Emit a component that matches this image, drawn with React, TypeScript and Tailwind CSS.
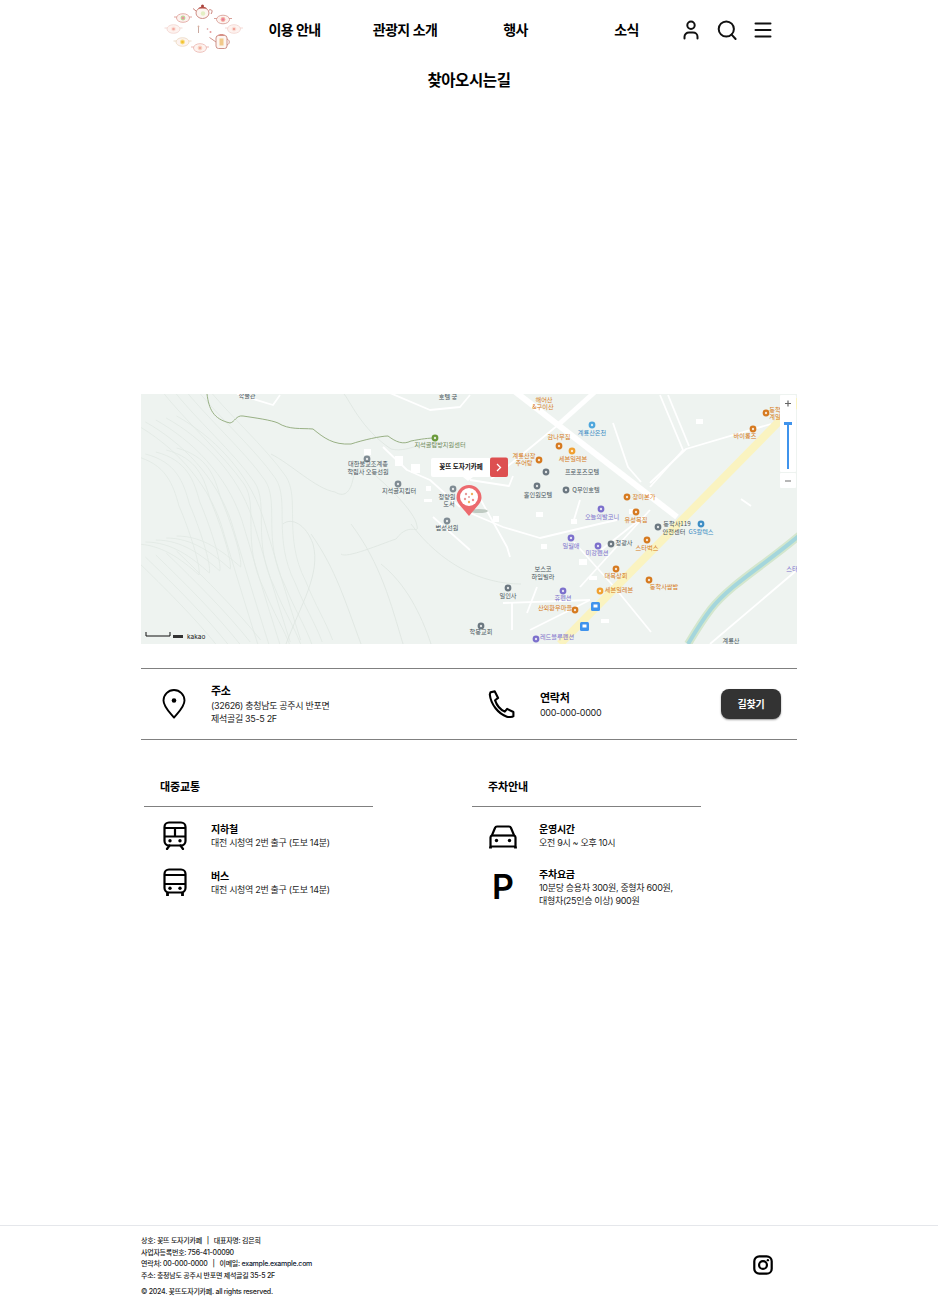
import React from "react";

const font = { fontFamily: "Inter, 'Noto Sans CJK KR', sans-serif" };

const cups = [
  { x: 22, y: 18, c: "#d98f86", f: "#ee8fa0", g: "#bcd79a" },
  { x: 62, y: 19.5, c: "#cf8a80", f: "#e9769a", g: "#f3b1a0" },
  { x: 12.5, y: 29, c: "#f1cfc9", f: "#f4a9a0", g: "#fbe3dc" },
  { x: 73, y: 29, c: "#f1cfc9", f: "#f2a196", g: "#fbe3dc" },
  { x: 21.5, y: 42, c: "#e8d2b8", f: "#f3bf2e", g: "#f7dd7a" },
  { x: 39, y: 48, c: "#e6a9a2", f: "#f3aaa0", g: "#f9d9c5" },
];

const Logo = () => (
  <svg width="90" height="60" viewBox="0 0 90 60" className="shrink-0">
    {cups.map((c) => (
      <g key={`${c.x}-${c.y}`}>
        <path d={`M${c.x + 6} ${c.y - 1}h3M${c.x - 6} ${c.y - 1}h-3`} stroke={c.c} strokeWidth="0.8" />
        <ellipse cx={c.x} cy={c.y} rx="6.5" ry="4.3" fill="#fdf3f0" stroke={c.c} strokeWidth="0.7" />
        <circle cx={c.x} cy={c.y} r="2.4" fill={c.g} />
        <circle cx={c.x} cy={c.y} r="1.3" fill={c.f} />
      </g>
    ))}
    <path d="M35 11l-3-2.5M48 10c3-1 4 1 2 4" fill="none" stroke="#c9827a" strokeWidth="1" />
    <ellipse cx="41.5" cy="13" rx="6.5" ry="5.5" fill="#fdf6f2" stroke="#c9827a" strokeWidth="0.9" />
    <path d="M37 8.5c2-2.5 7-2.5 9 0" fill="#b9534c" />
    <circle cx="41.5" cy="6" r="1.5" fill="#a9443e" />
    <circle cx="42" cy="13.5" r="2.2" fill="#e4efc4" />
    <rect x="55" y="35.5" width="11" height="13" rx="2.5" fill="#fdf6f2" stroke="#c9867c" strokeWidth="0.9" />
    <path d="M55 42l-6.5-4.5M66 39c3 1 3 5 0 6" fill="none" stroke="#c9867c" strokeWidth="0.9" />
    <path d="M56.5 35.5c1-2 7-2 8 0" fill="#d98f86" />
    <rect x="58.5" y="38.5" width="4" height="7" fill="#f1c98a" />
    <path d="M37.5 27v6" stroke="#c9a9a0" strokeWidth="1" />
    <circle cx="37.5" cy="26.5" r="0.9" fill="#d9b0a0" />
    <circle cx="46.5" cy="29" r="0.8" fill="#d98f8f" />
    <circle cx="49.5" cy="32" r="1" fill="#e79a9a" />
  </svg>
);

const UserIcon = () => (
  <svg width="24" height="24" viewBox="0 0 24 24" fill="none" stroke="#111" strokeWidth="2" strokeLinecap="round">
    <circle cx="12" cy="7.2" r="3.7" />
    <path d="M5.5 20.5v-1.7c0-2.6 2-4.3 4.5-4.3h4c2.5 0 4.5 1.7 4.5 4.3v1.7" />
  </svg>
);

const SearchIcon = () => (
  <svg width="24" height="24" viewBox="0 0 24 24" fill="none" stroke="#111" strokeWidth="2" strokeLinecap="round">
    <circle cx="11.3" cy="11" r="7.6" />
    <path d="M16.6 16.6l4 4.4" />
  </svg>
);

const MenuIcon = () => (
  <svg width="24" height="24" viewBox="0 0 24 24" fill="none" stroke="#111" strokeWidth="2" strokeLinecap="round">
    <path d="M4.5 5.5h15M4.5 12h15M4.5 18.5h15" />
  </svg>
);

const PinIcon = () => (
  <svg width="26" height="30" viewBox="0 0 26 30" fill="none" stroke="#000" strokeWidth="1.9">
    <path d="M13 28.6C8.5 23 2.5 17.8 2.5 11.5a10.5 10.5 0 0 1 21 0c0 6.3-6 11.5-10.5 17.1z" strokeLinejoin="round" />
    <circle cx="13" cy="11.5" r="2.3" fill="#000" stroke="none" />
  </svg>
);

const PhoneIcon = () => (
  <svg width="30" height="30" viewBox="0 0 30 30" fill="none" stroke="#000" strokeWidth="2.1" strokeLinejoin="round">
    <path d="M3.5 3.2l4.3-.8 3.3 6.5-3 2.4c1.7 5.2 5.3 9.2 9.7 11.3l2.3-2.7 6.3 3.1v4.3c-1 .8-5 1-6.5.4C11.5 24.7 3.8 15.5 2.8 5.5z" />
  </svg>
);

const TrainIcon = () => (
  <svg width="24" height="29" viewBox="0 0 24 29" fill="none" stroke="#000" strokeWidth="2.2">
    <rect x="1.5" y="1.5" width="21" height="23" rx="4.5" />
    <path d="M1.5 7h21M1.5 15.5h21M12 7v8.5" />
    <circle cx="7" cy="19.8" r="1.7" fill="#000" stroke="none" />
    <circle cx="17" cy="19.8" r="1.7" fill="#000" stroke="none" />
    <path d="M6.5 24.5L4 28M17.5 24.5L20 28" strokeLinecap="round" />
  </svg>
);

const BusIcon = () => (
  <svg width="24" height="29" viewBox="0 0 24 29" fill="none" stroke="#000" strokeWidth="2.2">
    <rect x="1.5" y="1.5" width="21" height="23" rx="4.5" />
    <path d="M1.5 7h21M1.5 16h21" />
    <circle cx="7" cy="20.2" r="1.7" fill="#000" stroke="none" />
    <circle cx="17" cy="20.2" r="1.7" fill="#000" stroke="none" />
    <path d="M4.5 24.5V28M19.5 24.5V28" strokeWidth="2.8" />
  </svg>
);

const CarIcon = () => (
  <svg width="28" height="24" viewBox="0 0 28 24" fill="none" stroke="#000" strokeWidth="2.2">
    <path d="M1.5 21.5v-9c0-1 .7-1.8 1.5-2.4l3-7.1c.3-1 1-1.5 2-1.5h12c1 0 1.7.5 2 1.5l3 7.1c.8.6 1.5 1.4 1.5 2.4v9z" strokeLinejoin="round" />
    <path d="M3 10.5h22" />
    <circle cx="7.5" cy="15.5" r="1.7" fill="#000" stroke="none" />
    <circle cx="20.5" cy="15.5" r="1.7" fill="#000" stroke="none" />
    <path d="M1.5 21.5V23.5M26.5 21.5V23.5" strokeWidth="2.8" />
  </svg>
);

const InstaIcon = () => (
  <svg width="22" height="22" viewBox="0 0 24 24" fill="none" stroke="#000" strokeWidth="2.4">
    <rect x="2.5" y="2.5" width="19" height="19" rx="5.5" />
    <circle cx="12" cy="12" r="4.3" />
    <circle cx="17.3" cy="6.7" r="1.3" fill="#000" stroke="none" />
  </svg>
);

const orange = "#d67a20";
const purple = "#7c70cc";
const gray = "#48535b";
const blue = "#3d8dc4";

// label positions are map coordinates (page x - 141, page y - 394)
const labels = [
  { x: 106, y: 4, t: "학물관", c: gray },
  { x: 307, y: 5, t: "호텔 궁", c: gray },
  { x: 403, y: 8, t: "해어산", c: orange },
  { x: 402, y: 15, t: "&구이산", c: orange },
  { x: 451, y: 41, t: "계룡산온천", c: blue },
  { x: 418, y: 45, t: "감나무집", c: orange },
  { x: 383, y: 64, t: "계룡산장", c: orange },
  { x: 383, y: 71, t: "추어탕", c: orange },
  { x: 432, y: 67, t: "세븐일레븐", c: orange },
  { x: 441, y: 80, t: "프로포즈모텔", c: gray },
  { x: 397, y: 103, t: "홀인원모텔", c: gray },
  { x: 445, y: 98, t: "Q무인호텔", c: gray },
  { x: 503, y: 105, t: "장미본가", c: orange },
  { x: 461, y: 125, t: "오늘의발코니", c: purple },
  { x: 495, y: 128, t: "유성복집", c: orange },
  { x: 536, y: 132, t: "동학사119", c: gray },
  { x: 533, y: 139.5, t: "안전센터", c: gray },
  { x: 560, y: 140, t: "GS칼텍스", c: blue },
  { x: 430, y: 154, t: "일월애", c: purple },
  { x: 483, y: 151, t: "청광사", c: gray },
  { x: 456, y: 161, t: "미강펜션", c: purple },
  { x: 506, y: 156, t: "스타벅스", c: orange },
  { x: 402, y: 177, t: "보스코", c: gray },
  { x: 402, y: 185, t: "하임빌라", c: gray },
  { x: 475, y: 184, t: "대복상회", c: orange },
  { x: 523, y: 195, t: "동학사쌈밥", c: orange },
  { x: 478, y: 198, t: "세븐일레븐", c: orange },
  { x: 367, y: 204, t: "일인사", c: gray },
  { x: 422, y: 206, t: "휴펜션", c: purple },
  { x: 414, y: 216, t: "산외환우마을", c: orange },
  { x: 340, y: 240, t: "학봉교회", c: gray },
  { x: 416, y: 245, t: "레드블루펜션", c: purple },
  { x: 604, y: 44, t: "바이롱즈", c: orange },
  { x: 634, y: 18, t: "동학", c: orange },
  { x: 634, y: 25, t: "계일", c: orange },
  { x: 590, y: 249, t: "계룡산", c: gray },
  { x: 651, y: 177, t: "스타", c: purple },
  { x: 227, y: 72, t: "대한불교조계종", c: gray },
  { x: 227, y: 80, t: "학림사 오등선원", c: gray },
  { x: 258, y: 99, t: "지석골지킴터", c: gray },
  { x: 299, y: 53, t: "지석골탐방지원센터", c: "#6f8a5a" },
  { x: 306, y: 105, t: "청량원", c: gray },
  { x: 308, y: 112, t: "도서", c: gray },
  { x: 306, y: 136, t: "법성선원", c: gray },
];

const dots = [
  { x: 226, y: 65, c: "#7f8b93" },
  { x: 257, y: 90, c: "#7f8b93" },
  { x: 312, y: 95, c: "#7f8b93" },
  { x: 306, y: 127, c: "#7f8b93" },
  { x: 294, y: 44, c: "#6a9a3a" },
  { x: 451, y: 31, c: "#4da6dc" },
  { x: 418, y: 52, c: orange },
  { x: 398, y: 66, c: orange },
  { x: 431, y: 57, c: "#f0a030" },
  { x: 405, y: 78, c: "#6b7780" },
  { x: 396, y: 92, c: "#6b7780" },
  { x: 425, y: 96, c: "#6b7780" },
  { x: 486, y: 103, c: orange },
  { x: 460, y: 115, c: purple },
  { x: 495, y: 118, c: orange },
  { x: 517, y: 133, c: "#6b7780" },
  { x: 560, y: 130, c: blue },
  { x: 430, y: 144, c: purple },
  { x: 470, y: 150, c: "#6b7780" },
  { x: 457, y: 152, c: purple },
  { x: 506, y: 146, c: orange },
  { x: 475, y: 175, c: orange },
  { x: 508, y: 186, c: orange },
  { x: 459, y: 197, c: "#f0a030" },
  { x: 367, y: 194, c: "#6b7780" },
  { x: 422, y: 197, c: purple },
  { x: 434, y: 216, c: orange },
  { x: 340, y: 232, c: "#6b7780" },
  { x: 395, y: 245, c: purple },
  { x: 612, y: 35, c: orange },
  { x: 625, y: 19, c: orange },
];

const contourBands = [
  "M-6 62C25 70 32 90 38 112C48 135 60 172 58 181C40 165 20 150 -6 150",
  "M-6 30C30 50 65 85 80 130C92 170 104 210 118 254",
  "M20 -4C45 28 82 60 103 90C118 112 100 150 123 195C133 220 143 235 150 254",
  "M-6 165C25 195 55 225 78 254",
];
const offsets = [0, 8, 16, 24, 32];

const contours = [
  "M130 60C150 70 175 95 194 98C205 105 210 95 212 85C215 70 225 72 235 82C250 95 270 115 275 128C280 145 270 125 255 145C240 150 205 165 200 160",
  "M142 130C150 123 165 130 172 150C180 180 160 210 145 250",
  "M170 140C195 175 205 210 220 250",
  "M203 0C208 5 220 35 250 55C270 60 290 40 300 55",
  "M270 130C300 170 340 190 380 190",
  "M240 170C265 190 280 220 290 250",
  "M210 130C240 170 250 210 262 250",
];

const roads = [
  "M519 1L542 56L509 93",
  "M527 1L548 52",
  "M472 29L487 73L500 88",
  "M509 89L545 55L630 30",
  "M329 119L362 133L399 144L462 129L476 126",
  "M439 106L432 129",
  "M439 193L509 116",
  "M362 209L449 206",
  "M371 209L371 236",
  "M389 236L449 206",
  "M396 193L386 219",
  "M329 86L368 92L372 82",
  "M336 99L366 153L369 163",
  "M242 53L266 76L289 86L319 113",
  "M292 123L329 156",
  "M96 0L132 11L139 1",
  "M249 -1L289 16L319 13L329 1",
  "M569 250L656 176",
  "M417 31L372 68L350 85",
  "M460 156L502 123",
  "M433 148L475 195L510 238",
  "M610 112L600 105",
];

const blocks = [
  [223, 55, 7, 6],
  [254, 62, 8, 10],
  [270, 70, 9, 9],
  [285, 92, 5, 5],
  [283, 105, 8, 3],
  [395, 118, 7, 5],
  [430, 125, 6, 5],
  [438, 165, 8, 6],
  [400, 150, 6, 5],
  [488, 115, 6, 5],
  [555, 25, 7, 5],
  [448, 182, 8, 4],
  [460, 225, 8, 4],
  [352, 122, 6, 6],
];

const KakaoMap = () => (
  <svg viewBox="0 0 656 250" width="656" height="250" className="block" style={{ fontFamily: "'Noto Sans CJK KR', sans-serif" }}>
    <rect width="656" height="250" fill="#eef3f0" />
    {contourBands.map((d) =>
      offsets.map((o) => (
        <path key={`${d}-${o}`} d={d} transform={`translate(${o * 1.3} ${-o * 0.25})`} fill="none" stroke="#e1e8e3" strokeWidth="0.8" />
      ))
    )}
    {contours.map((d) => (
      <path key={d} d={d} fill="none" stroke="#dde5df" strokeWidth="0.8" />
    ))}
    {roads.map((d) => (
      <path key={d} d={d} fill="none" stroke="#fff" strokeWidth="1.8" strokeLinejoin="round" />
    ))}
    {blocks.map(([x, y, w, h]) => (
      <rect key={`${x}-${y}`} x={x} y={y} width={w} height={h} fill="#fff" />
    ))}
    <path d="M372 -4L536 123" fill="none" stroke="#fff" strokeWidth="6" />
    <path d="M456 -4L417 31" fill="none" stroke="#fff" strokeWidth="5" />
    <path d="M665 0L419 250" fill="none" stroke="#faf3c0" strokeWidth="8" />
    <path d="M660 140C625 170 590 190 570 215C560 228 553 240 547 250" fill="none" stroke="#d3e6cd" strokeWidth="8" />
    <path d="M660 140C625 170 590 190 570 215C560 228 553 240 547 250" fill="none" stroke="#a4d6dc" strokeWidth="4" />
    <path
      d="M66 0C68 15 72 25 89 29C94 28 95 21 102 22C115 24 130 26 137 29C148 36 160 34 172 35C183 44 192 51 210 50C222 46 240 42 247 42C255 48 262 51 270 47C280 45 288 44 294 44"
      fill="none"
      stroke="#8fa878"
      strokeWidth="0.9"
    />
    {dots.map((d) => (
      <g key={`${d.x}-${d.y}`}>
        <circle cx={d.x} cy={d.y} r="3.4" fill={d.c} />
        <circle cx={d.x} cy={d.y} r="1.2" fill="#fff" opacity="0.8" />
      </g>
    ))}
    {labels.map((l) => (
      <text key={`${l.t}-${l.y}`} x={l.x} y={l.y} fontSize="6.2" fill={l.c} textAnchor="middle">
        {l.t}
      </text>
    ))}
    <rect x="450" y="208" width="9" height="9" rx="1.5" fill="#3f93ec" />
    <rect x="452.5" y="210.5" width="4" height="3" fill="#fff" />
    <rect x="439" y="228" width="9" height="9" rx="1.5" fill="#3f93ec" />
    <rect x="441.5" y="230.5" width="4" height="3" fill="#fff" />

    <path d="M5 238v4h24v-4" fill="none" stroke="#111" strokeWidth="1" />
    <rect x="32" y="241" width="10" height="3" fill="#333" />
    <text x="46" y="245" fontSize="6.5" fill="#222" fontFamily="Inter, sans-serif">kakao</text>

    <rect x="290" y="64" width="60" height="19" rx="2" fill="#fff" />
    <path d="M322 83l5 4 5-4z" fill="#fff" />
    <rect x="349" y="63.5" width="18" height="19.5" rx="2" fill="#dd4f50" />
    <path d="M356 70l3.5 3.5-3.5 3.5" fill="none" stroke="#fff" strokeWidth="1.3" />
    <text x="320" y="75" textAnchor="middle" fontSize="6.5" fontWeight="700" fill="#111">꽃뜨 도자기카페</text>

    <ellipse cx="338" cy="117" rx="9" ry="2" fill="#bfcac2" />
    <path d="M328 122C320 112 315.5 109 315.5 103.5a12.5 12.5 0 0 1 25 0c0 5.5-4.5 8.5-12.5 18.5z" fill="#ec6a6e" />
    <circle cx="328" cy="103" r="9" fill="#fff" />
    <circle cx="325" cy="100" r="1.2" fill="#e79a9a" />
    <circle cx="331" cy="100" r="1.2" fill="#f0b060" />
    <circle cx="324" cy="105" r="1.2" fill="#e79a9a" />
    <circle cx="328" cy="103" r="1" fill="#e79a9a" />
    <circle cx="332" cy="106" r="1.2" fill="#ef8f8f" />
    <circle cx="328" cy="108" r="1.2" fill="#f0b060" />

    <rect x="639" y="1" width="16" height="77" rx="1" fill="#fff" />
    <rect x="639" y="79" width="16" height="15" rx="1" fill="#fff" />
    <path d="M644 9.5h6M647 6.5v6" stroke="#666" strokeWidth="1.2" />
    <path d="M644 87h6" stroke="#888" strokeWidth="1.2" />
    <rect x="646" y="29" width="2" height="46" fill="#3f93ec" />
    <rect x="643" y="28" width="8" height="3" fill="#3f93ec" />
  </svg>
);

const Info = ({ title, lines }: { title: string; lines: string[] }) => (
  <div>
    <p className="text-[10px] leading-[14px] font-bold tracking-tight text-black">{title}</p>
    {lines.map((l) => (
      <p key={l} className="text-[9px] leading-[13px] tracking-[-0.035em] text-[#222]">
        {l}
      </p>
    ))}
  </div>
);

const App: React.FC = () => {
  return (
    <div className="w-[938px] bg-white text-black" style={font}>
      <header className="h-[60px] flex items-center pl-[161px]">
        <Logo />
        <nav className="flex text-sm font-semibold tracking-[-0.04em] w-[444px] -ml-[12px]">
          <a className="w-[111px] text-center">이용 안내</a>
          <a className="w-[110px] text-center">관광지 소개</a>
          <a className="w-[111px] text-center">행사</a>
          <a className="w-[111px] text-center">소식</a>
        </nav>
        <div className="flex gap-3 -ml-[4px]">
          <UserIcon />
          <SearchIcon />
          <MenuIcon />
        </div>
      </header>

      <h1 className="text-center text-[15.5px] leading-[24px] font-semibold tracking-tight mt-[9px]">찾아오시는길</h1>

      <main className="w-[656px] ml-[141px] mt-[301px]">
        <KakaoMap />

        <section className="mt-6 h-[72px] border-y border-[#808080] grid grid-cols-[328px_1fr] items-center">
          <div className="flex items-center pl-5">
            <div className="w-[50px]">
              <PinIcon />
            </div>
            <div>
              <p className="text-[11px] leading-[16px] font-bold tracking-tight">주소</p>
              <p className="text-[9px] leading-[13px] tracking-[-0.035em] text-[#222]">(32626) 충청남도 공주시 반포면</p>
              <p className="text-[9px] leading-[13px] tracking-[-0.035em] text-[#222]">제석골길 35-5 2F</p>
            </div>
          </div>
          <div className="flex items-center pl-[18px]">
            <div className="w-[53px]">
              <PhoneIcon />
            </div>
            <div>
              <p className="text-[11px] leading-[16px] font-bold tracking-tight">연락처</p>
              <p className="text-[9px] leading-[13px] tracking-[-0.035em] text-[#222]">000-000-0000</p>
            </div>
            <button className="ml-auto mr-4 w-[60px] h-[30px] rounded-lg bg-[#333] text-white text-[10px] font-bold tracking-tight shadow-[0_1px_2px_rgba(0,0,0,0.4)]">
              길찾기
            </button>
          </div>
        </section>

        <section className="mt-[30px] grid grid-cols-[328px_1fr]">
          <div className="pl-[3px]">
            <h2 className="w-[229px] h-[37px] pl-4 pt-[9px] border-b border-[#808080] text-[11px] leading-[16px] font-bold tracking-[-0.01em]">대중교통</h2>
            <div className="mt-[12px] flex items-center h-[32px]">
              <div className="w-[48px] pl-[19px] box-content">
                <TrainIcon />
              </div>
              <Info title="지하철" lines={["대전 시청역 2번 출구 (도보 14분)"]} />
            </div>
            <div className="mt-[15px] flex items-center h-[32px]">
              <div className="w-[48px] pl-[19px] box-content">
                <BusIcon />
              </div>
              <Info title="버스" lines={["대전 시청역 2번 출구 (도보 14분)"]} />
            </div>
          </div>
          <div className="pl-[3px]">
            <h2 className="w-[229px] h-[37px] pl-4 pt-[9px] border-b border-[#808080] text-[11px] leading-[16px] font-bold tracking-[-0.01em]">주차안내</h2>
            <div className="mt-[12px] flex items-center h-[32px]">
              <div className="w-[50px] pl-[17px] box-content pt-[3px]">
                <CarIcon />
              </div>
              <Info title="운영시간" lines={["오전 9시 ~ 오후 10시"]} />
            </div>
            <div className="mt-[16px] flex items-center">
              <div className="w-[47px] pl-[20px] box-content text-[34px] leading-none font-semibold">P</div>
              <Info title="주차요금" lines={["10분당 승용차 300원, 중형차 600원,", "대형차(25인승 이상) 900원"]} />
            </div>
          </div>
        </section>
      </main>

      <footer className="mt-[318px] h-[78px] border-t border-[#e5e7eb] pl-[141px] pr-[164px] flex items-center justify-between">
        <div className="text-[7px] leading-[11.5px] font-medium tracking-[-0.035em] text-[#222] pt-1">
          <p>상호: 꽃뜨 도자기카페 &nbsp; | &nbsp; 대표자명: 김은희</p>
          <p>사업자등록번호: 756-41-00090</p>
          <p>
            연락처: 00-000-0000 &nbsp; | &nbsp; 이메일: <span className="text-[#123]">example.example.com</span>
          </p>
          <p>주소: 충청남도 공주시 반포면 제석골길 35-5 2F</p>
          <p className="mt-[5px]">© 2024. 꽃뜨도자기카페. all rights reserved.</p>
        </div>
        <InstaIcon />
      </footer>
    </div>
  );
};

export default App;
